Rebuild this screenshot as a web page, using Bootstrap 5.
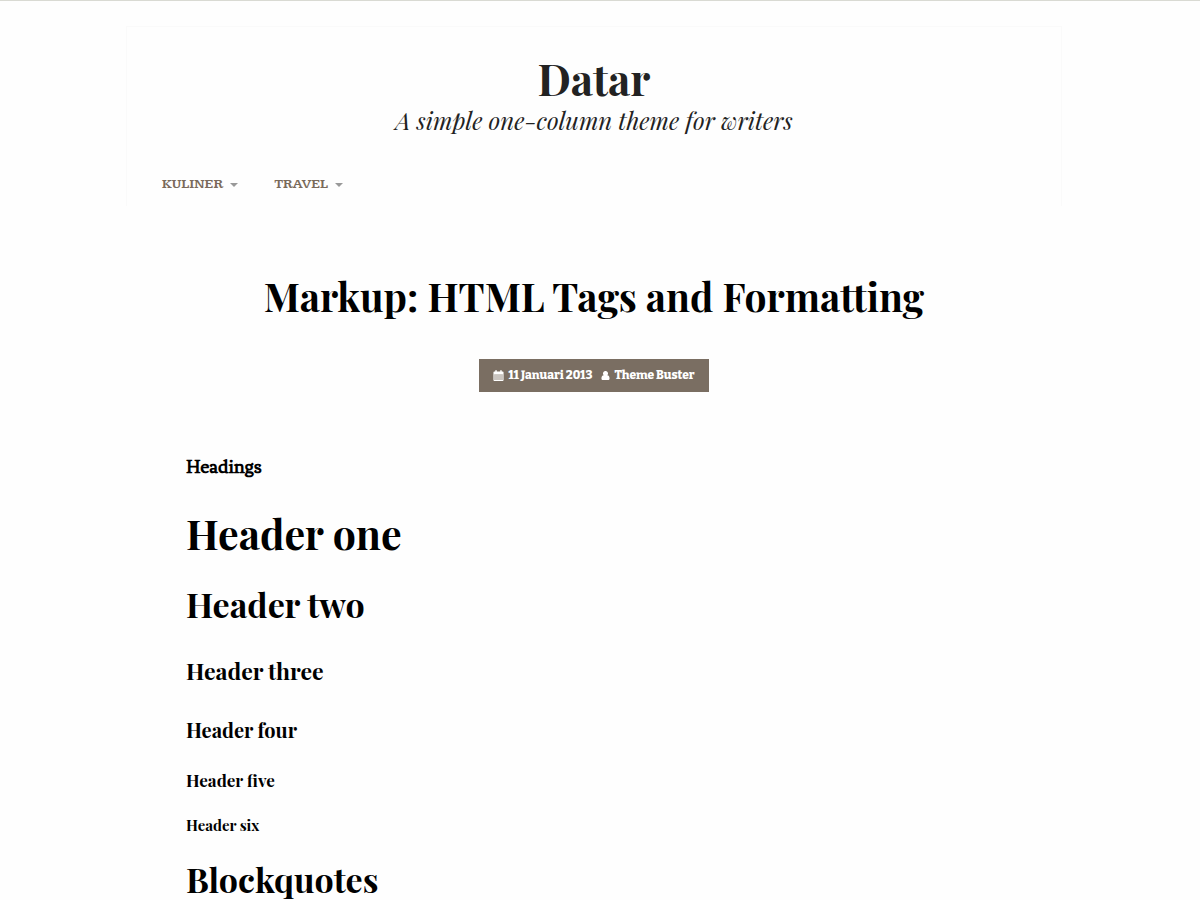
<!DOCTYPE html>
<html lang="id">
<head>
<meta charset="utf-8">
<meta name="viewport" content="width=device-width, initial-scale=1">
<title>Markup: HTML Tags and Formatting – Datar</title>
<link rel="stylesheet" href="https://cdn.jsdelivr.net/npm/bootstrap@5.3.0/dist/css/bootstrap.min.css">
<style>
  body { font-family: "Playfair Display", "Liberation Serif", serif; color: #000; background: #fefefe; border-top: 1px solid #d9dad3; }
  .page-shell { width: 78%; max-width: 1080px; padding-top: 25px; margin-left: 10.5%; }
  .site-header { border: 1px solid #fafafa; border-bottom: 0; padding: 26px 35px 12px; }
  .site-title { font-size: 43px; line-height: 50px; font-weight: 700; }
  .site-title a { color: #222; }
  .tagline { font-size: 24px; line-height: 34px; color: #222; }
  .main-menu { margin-top: 37px; gap: 36px; }
  .menu-link { font-family: Kameron, "Liberation Serif", serif; font-size: 14px; line-height: 20px; font-weight: 600; color: #7a6a5b; gap: 7px; }
  .menu-link::after { margin: 2px 0 0; border-top: 4px solid #999; border-right: 4px solid transparent; border-left: 4px solid transparent; }
  .post { padding: 66px 60px 0; }
  .post-title { font-size: 39px; line-height: 48px; font-weight: 700; margin-bottom: 39px; }
  .post-meta { font-family: Bitter, "Liberation Serif", serif; background: #7a6e62; color: #fff; font-size: 12px; line-height: 17px; font-weight: 800; padding: 8px 14px; gap: 9px; }
  .post-meta a { color: #fff; }
  .meta-item { gap: 4px; }
  .post-body { padding-top: 61px; }
  .post-body > * { font-weight: 700; margin: 0; }
  .intro { font-family: Fenix, "Liberation Serif", serif; font-size: 20px; line-height: 28px; }
  .post-body h1 { font-size: 41px; line-height: 52px; margin-top: 26px; }
  .post-body h2 { font-size: 34px; line-height: 40px; margin-top: 25px; }
  .post-body h3 { font-size: 23px; line-height: 30px; margin-top: 32px; }
  .post-body h4 { font-size: 20px; line-height: 26px; margin-top: 31px; }
  .post-body h5 { font-size: 17px; line-height: 22px; margin-top: 26px; }
  .post-body h6 { font-size: 15px; line-height: 18px; margin-top: 25px; }
</style>
</head>
<body>
<div class="page-shell">
  <header class="site-header">
    <div class="text-center">
      <p class="site-title mb-0"><a href="#" class="text-decoration-none">Datar</a></p>
      <p class="tagline fst-italic mb-0">A simple one-column theme for writers</p>
    </div>
    <nav class="main-menu d-flex flex-wrap" aria-label="Menu">
      <a href="#" class="menu-link dropdown-toggle d-flex align-items-center text-decoration-none text-uppercase">Kuliner</a>
      <a href="#" class="menu-link dropdown-toggle d-flex align-items-center text-decoration-none text-uppercase">Travel</a>
    </nav>
  </header>
  <main>
    <article class="post">
      <h1 class="post-title text-center">Markup: HTML Tags and Formatting</h1>
      <div class="d-flex justify-content-center">
        <div class="post-meta d-flex flex-wrap">
          <span class="meta-item d-flex align-items-center">
            <svg width="11" height="11" viewBox="0 0 11 12" aria-hidden="true"><path fill="#fff" fill-rule="evenodd" d="M1 1.500h1V.8Q2 0 2.800 0t.8.8v.7h3.800V.8Q7.400 0 8.200 0T9 .8v.7h1q1 0 1 1V11q0 1-1 1H1q-1 0-1-1V2.500q0-1 1-1zM1 4.500V11h9V4.500z"/><path fill="#fff" fill-opacity=".6" d="M1 4.500h9V11H1z"/></svg>
            <a href="#" class="text-decoration-none">11 Januari 2013</a>
          </span>
          <span class="meta-item d-flex align-items-center">
            <svg width="9" height="9" viewBox="0 0 9 10" aria-hidden="true"><path fill="#fff" d="M4.500 0a2.600 2.700 0 0 1 1.900 4.700C8.300 4.900 9 6.400 9 8.200 9 9.400 8.300 10 7.300 10H1.700C.7 10 0 9.400 0 8.200 0 6.400.7 4.900 2.600 4.700A2.600 2.700 0 0 1 4.500 0z"/></svg>
            <a href="#" class="text-decoration-none">Theme Buster</a>
          </span>
        </div>
      </div>
      <div class="post-body">
        <p class="intro">Headings</p>
        <h1>Header one</h1>
        <h2>Header two</h2>
        <h3>Header three</h3>
        <h4>Header four</h4>
        <h5>Header five</h5>
        <h6>Header six</h6>
        <h2>Blockquotes</h2>
      </div>
    </article>
  </main>
</div>
<script src="https://cdn.jsdelivr.net/npm/bootstrap@5.3.0/dist/js/bootstrap.bundle.min.js"></script>
</body>
</html>
